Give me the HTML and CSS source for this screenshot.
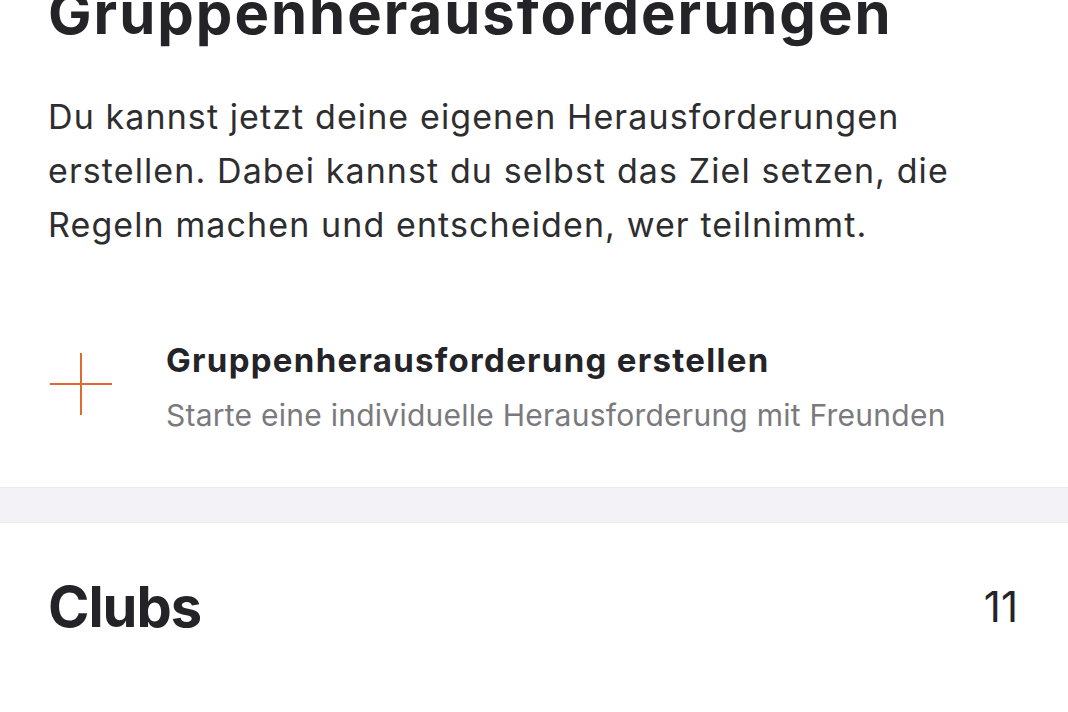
FILE: index.html
```html
<!DOCTYPE html>
<html lang="de">
<head>
  <meta charset="UTF-8">
  <meta name="viewport" content="width=device-width, initial-scale=1.0">
  <title>Gruppenherausforderungen</title>
  <link rel="stylesheet" href="styles.css">
</head>
<body>
  <section class="challenges">
    <h1>Gruppenherausforderungen</h1>
    <p class="intro">Du kannst jetzt deine eigenen Herausforderungen erstellen. Dabei kannst du selbst das Ziel setzen, die Regeln machen und entscheiden, wer teilnimmt.</p>

    <div class="create-row">
      <svg class="plus-icon" width="64" height="64" viewBox="0 0 64 64">
        <path d="M32 1 V63 M1 32 H63" stroke="#e4682e" stroke-width="2" fill="none"/>
      </svg>
      <div class="create-text">
        <div class="create-title">Gruppenherausforderung erstellen</div>
        <div class="create-sub">Starte eine individuelle Herausforderung mit Freunden</div>
      </div>
    </div>
  </section>

  <div class="divider"></div>

  <section class="clubs">
    <h2>Clubs</h2>
    <span class="count">11</span>
  </section>
</body>
</html>
```

FILE: styles.css
```css
body {
  margin: 0;
  background: #fff;
  font-family: Inter, "Noto Sans", sans-serif;
  color: #242428;
  overflow: hidden;
}

.challenges {
  padding: 0 40px 0 48px;
}

h1 {
  margin: -21px 0 0 0;
  font-size: 58px;
  font-weight: 700;
  line-height: 68px;
  letter-spacing: 2px;
  white-space: nowrap;
}

.intro {
  margin: 43px 0 0 0;
  font-size: 34px;
  line-height: 54px;
  letter-spacing: 1.1px;
  color: #2e2e30;
}

.create-row {
  display: flex;
  align-items: flex-start;
  margin-top: 86px;
  padding-bottom: 52px;
}

.plus-icon {
  flex: none;
  margin: 14px 53px 0 1px;
}

.create-title {
  font-size: 33px;
  font-weight: 700;
  line-height: 44px;
  letter-spacing: 1.3px;
}

.create-sub {
  margin-top: 13px;
  font-size: 30px;
  line-height: 40px;
  letter-spacing: 0.25px;
  color: #7a7a7e;
}

.divider {
  height: 34px;
  background: #f3f2f7;
  border-top: 1px solid #ebebed;
  border-bottom: 1px solid #ebebed;
}

.clubs {
  display: flex;
  justify-content: space-between;
  align-items: flex-start;
  padding: 50px 50px 0 48px;
}

.clubs h2 {
  margin: 0;
  font-size: 56px;
  font-weight: 700;
  line-height: 68px;
  letter-spacing: -1px;
}

.count {
  font-size: 42px;
  line-height: 68px;
}
```
